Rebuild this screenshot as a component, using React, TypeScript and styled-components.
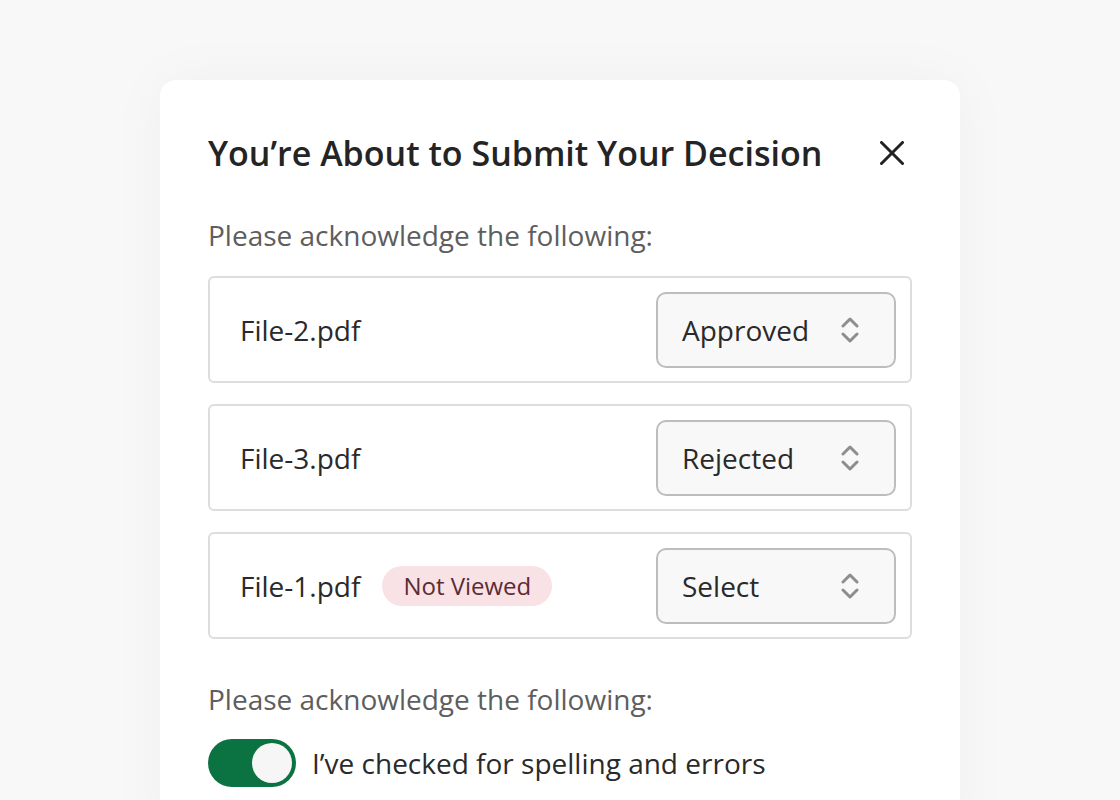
import styled, { createGlobalStyle } from 'styled-components'

const GlobalStyle = createGlobalStyle`
    html, body {
        margin: 0;
        padding: 0;
        background: #f8f8f8;
        font-family: 'Open Sans', 'Noto Sans', sans-serif;
        overflow: hidden;
    }
`

const Page = styled.div`
    width: 1120px;
    height: 800px;
    padding-top: 80px;
    box-sizing: border-box;
    display: flex;
    justify-content: center;
`

const Dialog = styled.div`
    width: 800px;
    height: 760px;
    box-sizing: border-box;
    background: #ffffff;
    border-radius: 16px 16px 0 0;
    box-shadow: 0 0 60px rgba(0, 0, 0, 0.04);
    padding: 51px 48px 0;
    display: flex;
    flex-direction: column;
`

const Header = styled.div`
    display: flex;
    align-items: center;
    justify-content: space-between;
    padding-right: 8px;
`

const Title = styled.h2`
    margin: 0;
    font-size: 34px;
    line-height: 44px;
    font-weight: 600;
    color: #242424;
`

const CloseButton = styled.button`
    border: none;
    background: none;
    padding: 0;
    width: 24px;
    height: 24px;
    display: flex;
    align-items: center;
    justify-content: center;
    cursor: pointer;
    color: #222222;
`

const Prompt = styled.p<{ $top: number }>`
    margin: ${(p) => p.$top}px 0 0;
    font-size: 28px;
    line-height: 38px;
    color: #5e5e5e;
`

const FileList = styled.div`
    margin-top: 22px;
    display: flex;
    flex-direction: column;
    gap: 21px;
`

const FileRow = styled.div`
    height: 107px;
    box-sizing: border-box;
    border: 2px solid #dddddd;
    border-radius: 6px;
    padding: 0 14px 0 30px;
    display: flex;
    align-items: center;
    justify-content: space-between;
`

const FileName = styled.div`
    display: flex;
    align-items: center;
    gap: 22px;
    font-size: 28px;
    color: #2a2a2a;
`

const Badge = styled.span`
    height: 40px;
    padding: 0 21px;
    display: inline-flex;
    align-items: center;
    border-radius: 20px;
    background: #f9e2e5;
    color: #5b2c34;
    font-size: 24px;
`

const SelectBox = styled.div`
    width: 240px;
    height: 76px;
    box-sizing: border-box;
    border: 2px solid #bdbdbd;
    border-radius: 10px;
    background: #f8f8f8;
    padding: 0 35px 0 24px;
    display: flex;
    align-items: center;
    justify-content: space-between;
    font-size: 28px;
    color: #2a2a2a;
`

const ToggleRow = styled.div`
    margin-top: 21px;
    display: flex;
    align-items: center;
    gap: 16px;
`

const Toggle = styled.div<{ $on: boolean }>`
    width: 88px;
    height: 48px;
    box-sizing: border-box;
    border-radius: 24px;
    padding: 4px;
    background: ${(p) => (p.$on ? '#0b7242' : '#cccccc')};
    display: flex;
    justify-content: ${(p) => (p.$on ? 'flex-end' : 'flex-start')};
`

const Knob = styled.div`
    width: 40px;
    height: 40px;
    border-radius: 50%;
    background: #f6f6f6;
`

const ToggleLabel = styled.span`
    font-size: 28px;
    color: #2a2a2a;
`

const Chevrons = () => (
    <svg width="18" height="30" viewBox="0 0 18 30" fill="none" stroke="#8e8e8e" strokeWidth="3" strokeLinecap="round" strokeLinejoin="round">
        <path d="M2 11 L9 4 L16 11" />
        <path d="M2 19 L9 26 L16 19" />
    </svg>
)

const CloseIcon = () => (
    <svg width="24" height="24" viewBox="0 0 24 24" fill="none" stroke="currentColor" strokeWidth="3" strokeLinecap="round">
        <path d="M1.5 1.5 L22.5 22.5" />
        <path d="M22.5 1.5 L1.5 22.5" />
    </svg>
)

const files = [
    { name: 'File-2.pdf', value: 'Approved', viewed: true },
    { name: 'File-3.pdf', value: 'Rejected', viewed: true },
    { name: 'File-1.pdf', value: 'Select', viewed: false },
]

const App = () => {
    return (
        <>
            <GlobalStyle />
            <Page>
                <Dialog>
                    <Header>
                        <Title>You’re About to Submit Your Decision</Title>
                        <CloseButton aria-label="Close">
                            <CloseIcon />
                        </CloseButton>
                    </Header>
                    <Prompt $top={41}>Please acknowledge the following:</Prompt>
                    <FileList>
                        {files.map((f) => (
                            <FileRow key={f.name}>
                                <FileName>
                                    {f.name}
                                    {!f.viewed && <Badge>Not Viewed</Badge>}
                                </FileName>
                                <SelectBox>
                                    {f.value}
                                    <Chevrons />
                                </SelectBox>
                            </FileRow>
                        ))}
                    </FileList>
                    <Prompt $top={41}>Please acknowledge the following:</Prompt>
                    <ToggleRow>
                        <Toggle $on>
                            <Knob />
                        </Toggle>
                        <ToggleLabel>I’ve checked for spelling and errors</ToggleLabel>
                    </ToggleRow>
                </Dialog>
            </Page>
        </>
    )
}

export default App
